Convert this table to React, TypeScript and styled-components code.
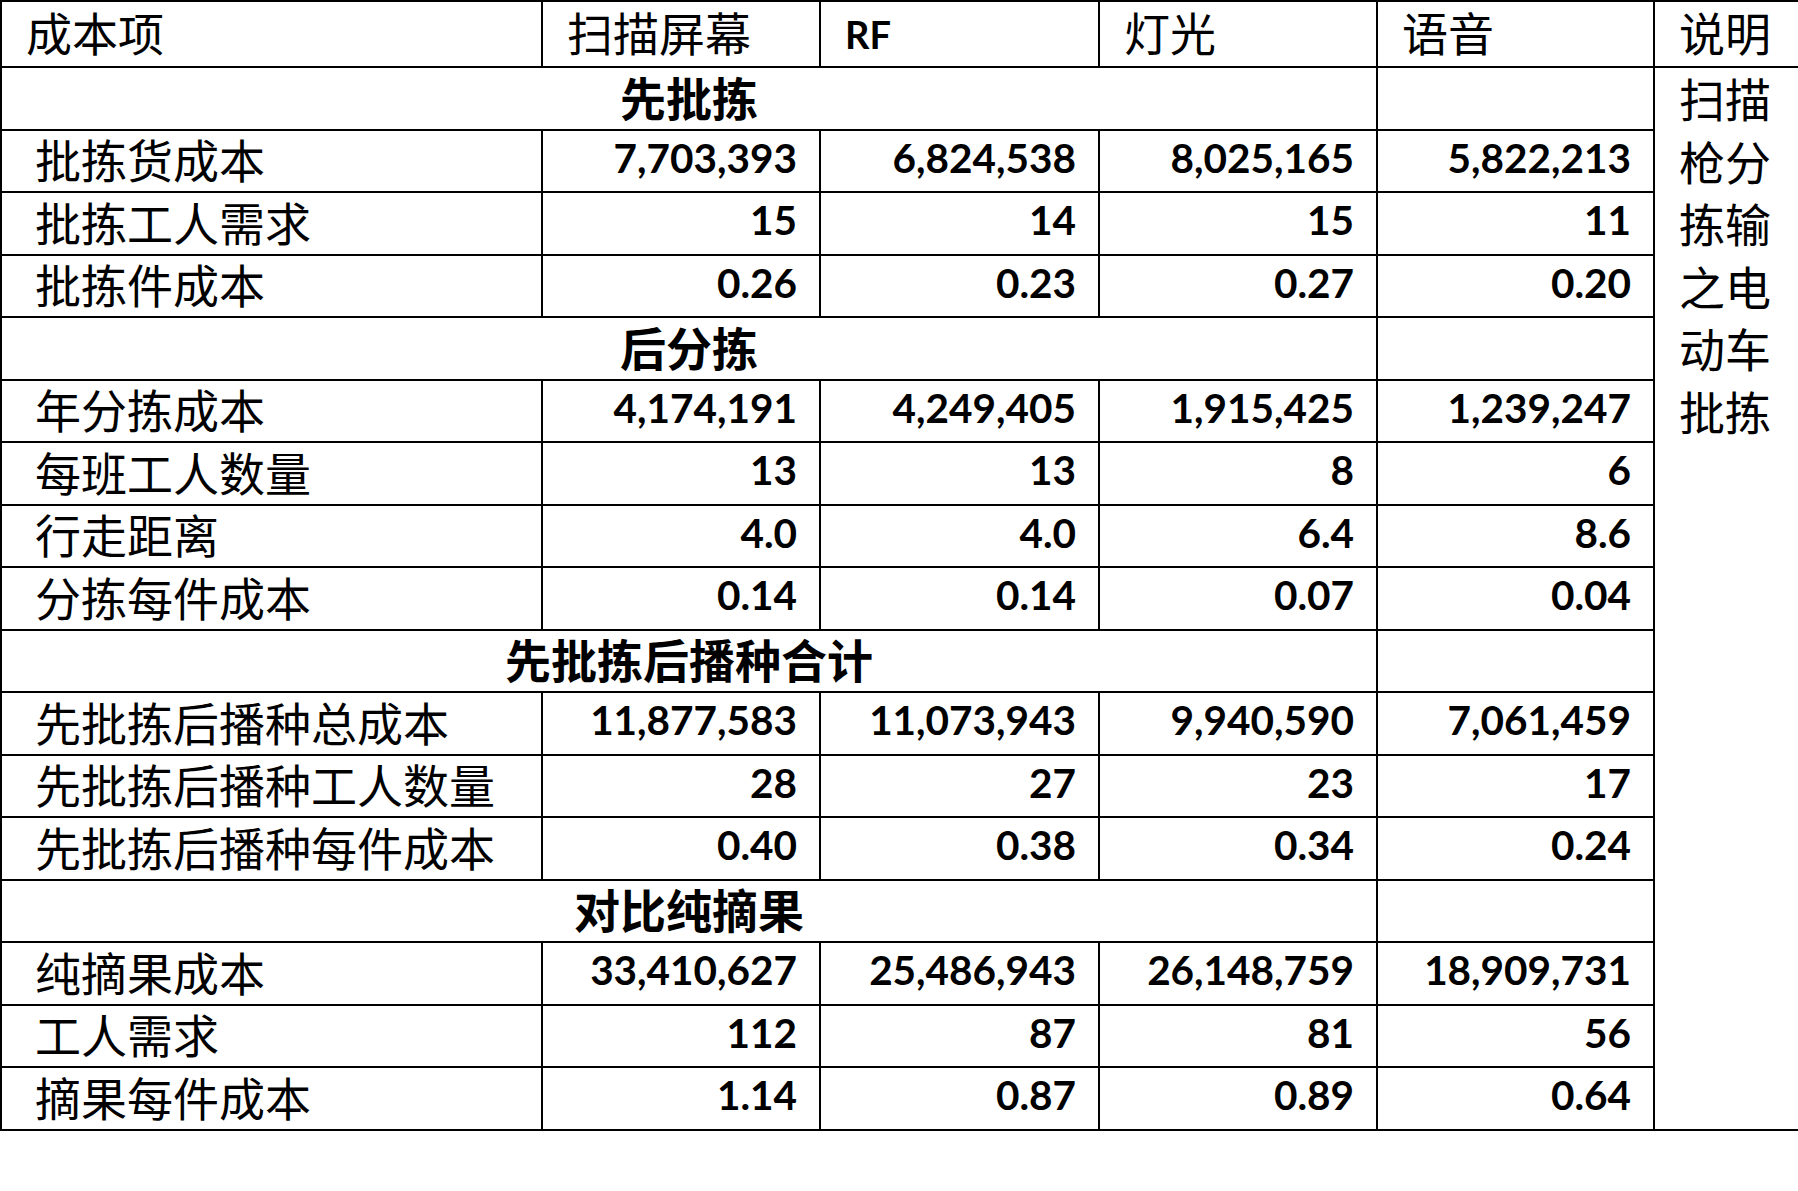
import React from 'react';
import styled, { createGlobalStyle } from 'styled-components';

const GlobalStyle = createGlobalStyle`
  html, body {
    margin: 0;
    padding: 0;
    background: #fff;
    overflow: hidden;
  }
`;

const Table = styled.table`
  border-collapse: collapse;
  table-layout: fixed;
  width: 1800px;
  color: #000;
  font-family: Lato, "Noto Sans CJK SC", sans-serif;
  td, th {
    border: 2px solid #000;
    padding: 0;
    line-height: 1;
    white-space: nowrap;
  }
`;

const HeadRow = styled.tr`
  height: 66px;
`;

const BodyRow = styled.tr`
  height: 62.5px;
`;

const HeadCell = styled.th<{ $latin?: boolean }>`
  text-align: left;
  vertical-align: middle;
  padding: 0 0 ${(p) => (p.$latin ? '1px' : '7px')} ${(p) => (p.$latin ? '24px' : '24px')} !important;
  font-family: ${(p) => (p.$latin ? 'Lato, sans-serif' : '"Noto Sans CJK SC", sans-serif')};
  font-size: ${(p) => (p.$latin ? '38px' : '46px')};
  font-weight: ${(p) => (p.$latin ? 700 : 400)};
`;

const SectionCell = styled.td`
  text-align: center;
  vertical-align: middle;
  padding-bottom: 5px !important;
  font-family: "Noto Sans CJK SC", sans-serif;
  font-size: 46px;
  font-weight: 700;
`;

const LabelCell = styled.td`
  text-align: left;
  vertical-align: middle;
  padding: 0 0 5px 33px !important;
  font-family: "Noto Sans CJK SC", sans-serif;
  font-size: 46px;
  font-weight: 400;
`;

const NumCell = styled.td`
  text-align: right;
  vertical-align: middle;
  padding: 0 22px 6px 0 !important;
  font-family: Lato, sans-serif;
  font-size: 40.5px;
  font-weight: 700;
`;

const BlankCell = styled.td``;

const NoteCell = styled.td`
  vertical-align: top;
  text-align: left;
  padding: 0 0 0 24px !important;
  white-space: normal !important;
  line-height: 62.5px !important;
  font-family: "Noto Sans CJK SC", sans-serif;
  font-size: 46px;
  font-weight: 400;
  position: relative;
  top: -2px;
`;

type Row = { label: string; values: string[] };
type Section = { title: string; rows: Row[] };

const sections: Section[] = [
  {
    title: '先批拣',
    rows: [
      { label: '批拣货成本', values: ['7,703,393', '6,824,538', '8,025,165', '5,822,213'] },
      { label: '批拣工人需求', values: ['15', '14', '15', '11'] },
      { label: '批拣件成本', values: ['0.26', '0.23', '0.27', '0.20'] },
    ],
  },
  {
    title: '后分拣',
    rows: [
      { label: '年分拣成本', values: ['4,174,191', '4,249,405', '1,915,425', '1,239,247'] },
      { label: '每班工人数量', values: ['13', '13', '8', '6'] },
      { label: '行走距离', values: ['4.0', '4.0', '6.4', '8.6'] },
      { label: '分拣每件成本', values: ['0.14', '0.14', '0.07', '0.04'] },
    ],
  },
  {
    title: '先批拣后播种合计',
    rows: [
      { label: '先批拣后播种总成本', values: ['11,877,583', '11,073,943', '9,940,590', '7,061,459'] },
      { label: '先批拣后播种工人数量', values: ['28', '27', '23', '17'] },
      { label: '先批拣后播种每件成本', values: ['0.40', '0.38', '0.34', '0.24'] },
    ],
  },
  {
    title: '对比纯摘果',
    rows: [
      { label: '纯摘果成本', values: ['33,410,627', '25,486,943', '26,148,759', '18,909,731'] },
      { label: '工人需求', values: ['112', '87', '81', '56'] },
      { label: '摘果每件成本', values: ['1.14', '0.87', '0.89', '0.64'] },
    ],
  },
];

const totalRows = sections.reduce((n, s) => n + s.rows.length + 1, 0);

export default function App() {
  return (
    <>
      <GlobalStyle />
      <Table>
        <colgroup>
          <col style={{ width: 541 }} />
          <col style={{ width: 278 }} />
          <col style={{ width: 279 }} />
          <col style={{ width: 278 }} />
          <col style={{ width: 277 }} />
          <col style={{ width: 147 }} />
        </colgroup>
        <thead>
          <HeadRow>
            <HeadCell>成本项</HeadCell>
            <HeadCell>扫描屏幕</HeadCell>
            <HeadCell $latin>RF</HeadCell>
            <HeadCell>灯光</HeadCell>
            <HeadCell>语音</HeadCell>
            <HeadCell>说明</HeadCell>
          </HeadRow>
        </thead>
        <tbody>
          {sections.map((section, si) => (
            <React.Fragment key={section.title}>
              <BodyRow>
                <SectionCell colSpan={4}>{section.title}</SectionCell>
                <BlankCell />
                {si === 0 && <NoteCell rowSpan={totalRows}>扫描枪分拣输之电动车批拣</NoteCell>}
              </BodyRow>
              {section.rows.map((row) => (
                <BodyRow key={row.label}>
                  <LabelCell>{row.label}</LabelCell>
                  {row.values.map((v, i) => (
                    <NumCell key={i}>{v}</NumCell>
                  ))}
                </BodyRow>
              ))}
            </React.Fragment>
          ))}
        </tbody>
      </Table>
    </>
  );
}
